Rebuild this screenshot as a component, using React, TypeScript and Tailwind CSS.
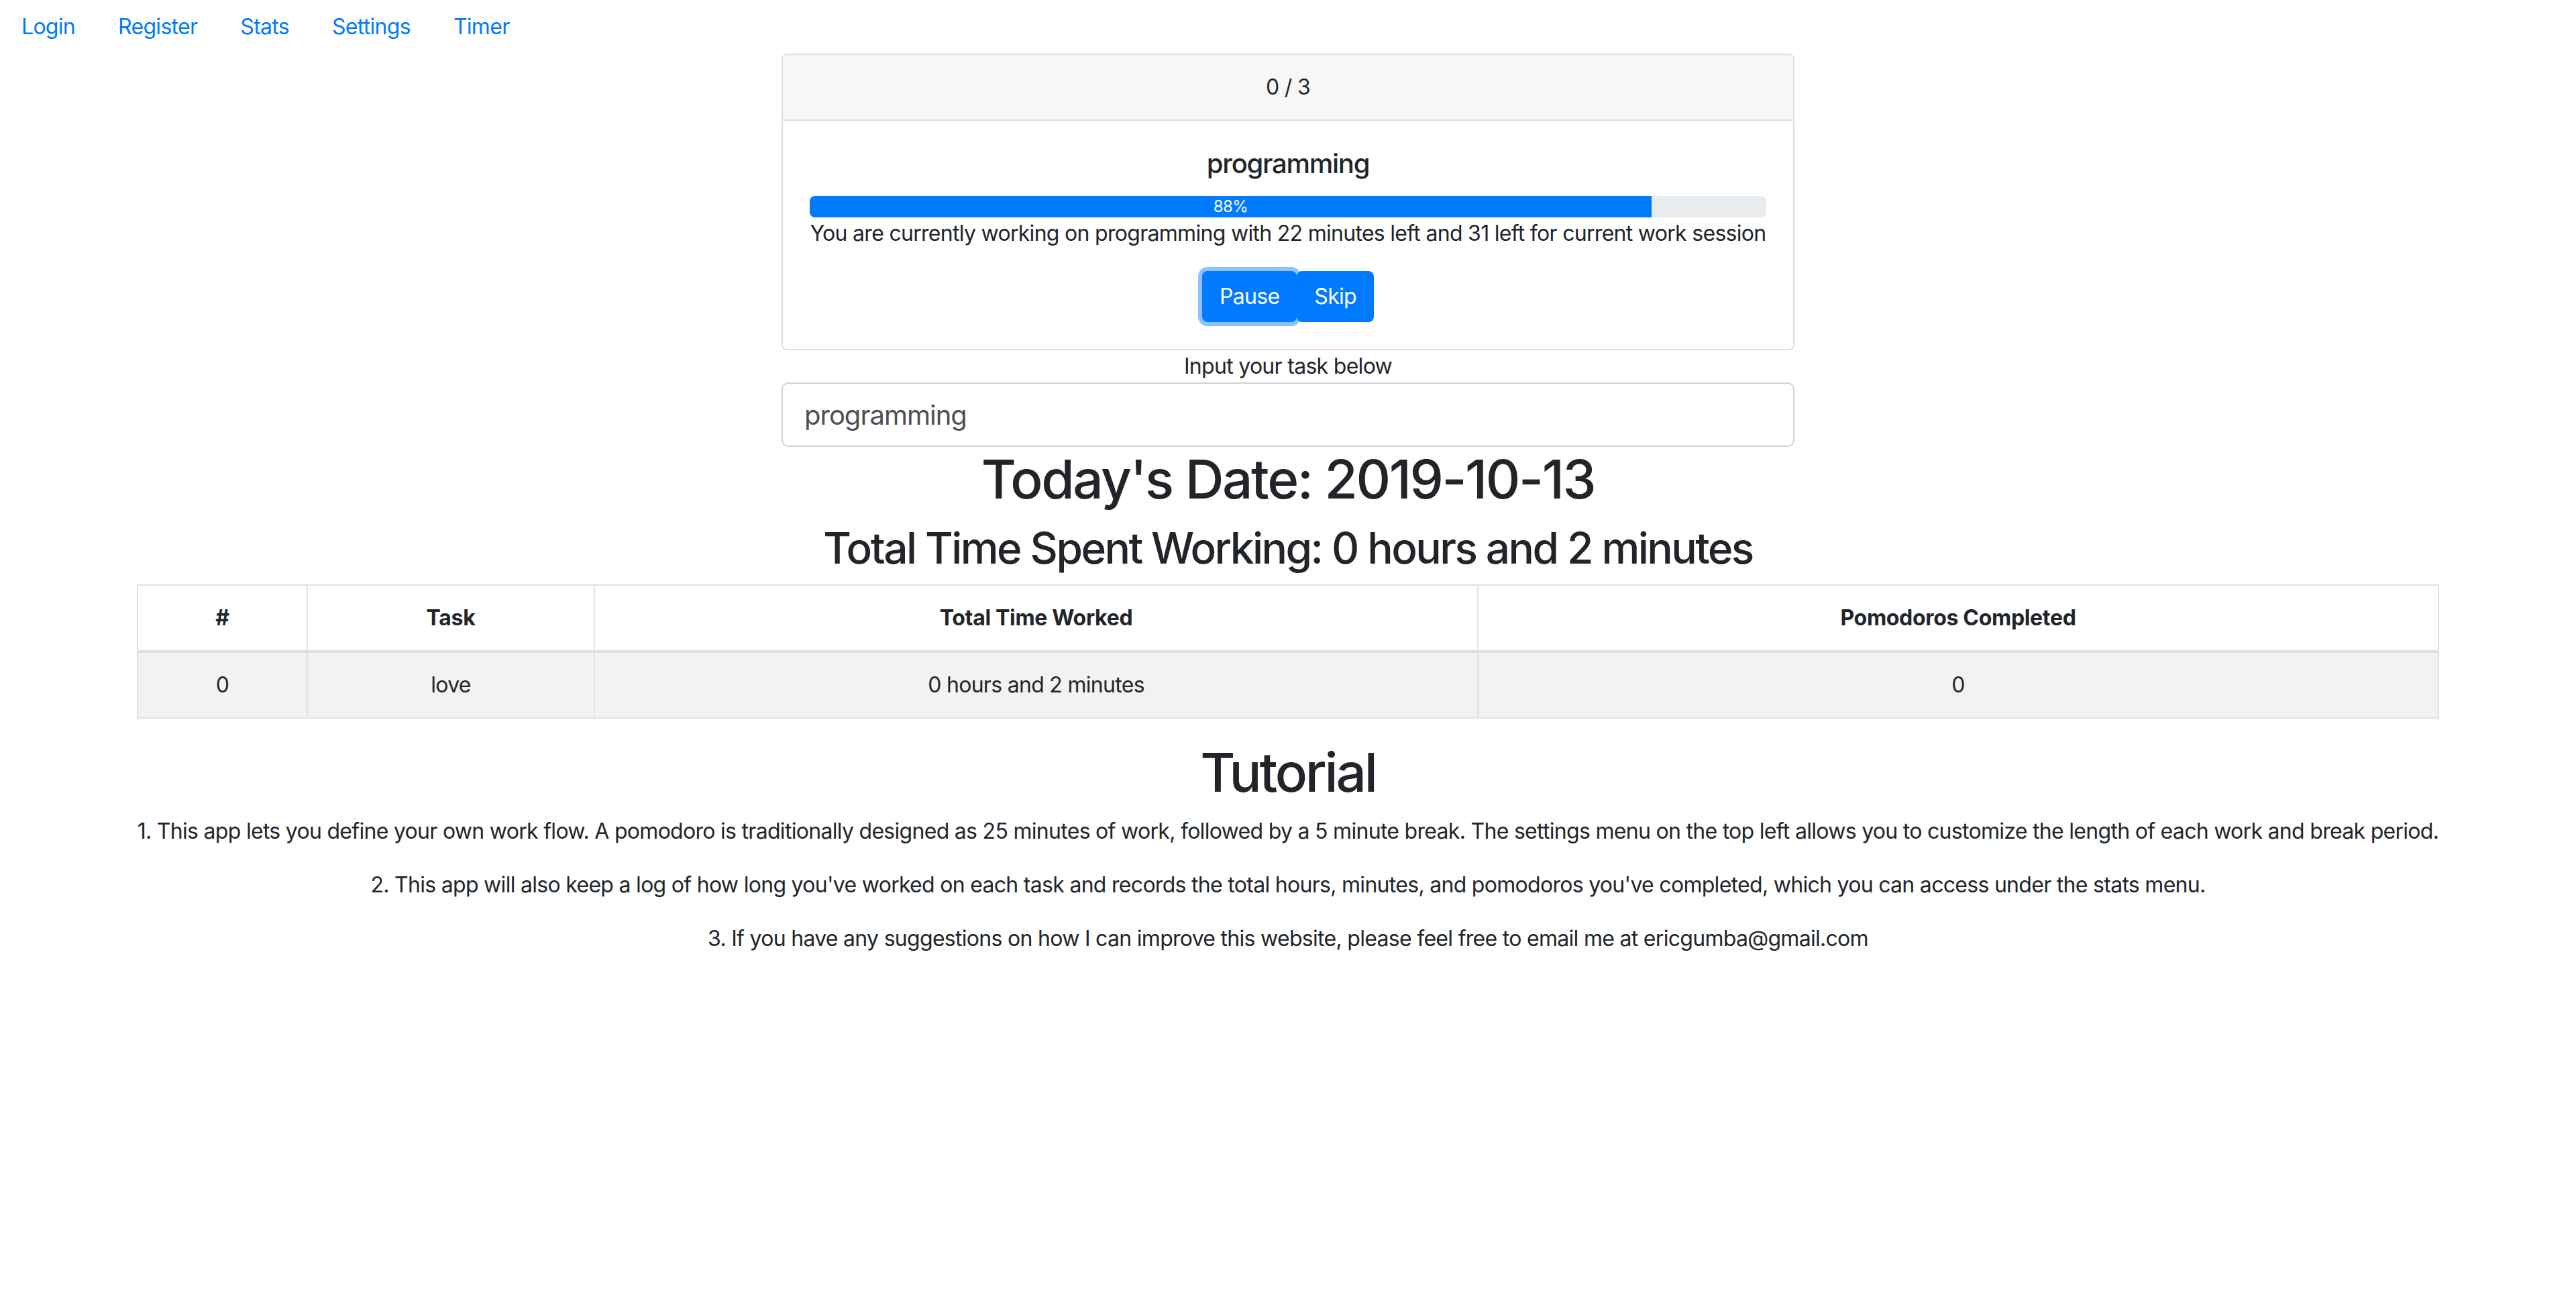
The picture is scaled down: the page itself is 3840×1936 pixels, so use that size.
import { useState } from 'react';

const links = ['Login', 'Register', 'Stats', 'Settings', 'Timer'];

const tutorial = [
  '1. This app lets you define your own work flow. A pomodoro is traditionally designed as 25 minutes of work, followed by a 5 minute break. The settings menu on the top left allows you to customize the length of each work and break period.',
  "2. This app will also keep a log of how long you've worked on each task and records the total hours, minutes, and pomodoros you've completed, which you can access under the stats menu.",
  '3. If you have any suggestions on how I can improve this website, please feel free to email me at ericgumba@gmail.com',
];

export default function App() {
  const [task, setTask] = useState('programming');
  const progress = 88;

  return (
    <div className="min-h-screen bg-white text-[#212529] font-['Inter',Arial,sans-serif] text-[32px] leading-[48px] tracking-[-0.022em]">
      <nav className="flex">
        {links.map((l) => (
          <a key={l} href="#" className="px-[32px] py-[16px] text-[#007bff]">
            {l}
          </a>
        ))}
      </nav>

      <div className="w-[1510px] mx-auto">
        <div className="border-2 border-[#dfdfdf] rounded-[8px] overflow-hidden">
          <div className="bg-[#f7f7f7] border-b-2 border-[#dfdfdf] py-[24px] text-center">0 / 3</div>
          <div className="p-[40px] text-center">
            <h5 className="text-[40px] leading-[48px] font-medium mb-[24px] tracking-[-0.032em]">{task}</h5>
            <div className="h-[32px] bg-[#e9ecef] rounded-[8px] overflow-hidden flex">
              <div
                className="bg-[#007bff] text-white text-[24px] leading-[32px] text-center"
                style={{ width: `${progress}%` }}
              >
                {progress}%
              </div>
            </div>
            <p className="mb-[32px] whitespace-nowrap">
              You are currently working on {task} with 22 minutes left and 31 left for current work session
            </p>
            <div className="flex justify-center">
              <button className="bg-[#007bff] text-white border-2 border-[#007bff] rounded-[8px] px-[24px] py-[12px] shadow-[0_0_0_6px_rgba(0,123,255,0.45)]">
                Pause
              </button>
              <button className="bg-[#007bff] text-white border-2 border-[#007bff] rounded-[8px] px-[24px] py-[12px]">
                Skip
              </button>
            </div>
          </div>
        </div>
        <div className="text-center">Input your task below</div>
        <input
          value={task}
          onChange={(e) => setTask(e.target.value)}
          className="block w-full h-[96px] px-[32px] text-[40px] text-[#495057] tracking-[-0.025em] border-2 border-[#ced4da] rounded-[10px] outline-none"
        />
      </div>

      <h1 className="text-center text-[80px] leading-[96px] font-medium mb-[16px] tracking-[-0.03em]">
        Today's Date: 2019-10-13
      </h1>
      <h2 className="text-center text-[64px] leading-[77px] font-medium mb-[16px] tracking-[-0.04em]">
        Total Time Spent Working: 0 hours and 2 minutes
      </h2>

      <table className="w-[3432px] mx-auto mb-[32px] border-collapse text-center table-fixed">
        <colgroup>
          <col className="w-[253px]" />
          <col className="w-[428px]" />
          <col className="w-[1317px]" />
          <col />
        </colgroup>
        <thead>
          <tr>
            {['#', 'Task', 'Total Time Worked', 'Pomodoros Completed'].map((h) => (
              <th key={h} className="border-2 border-b-4 border-[#dee2e6] p-[24px] font-bold tracking-[-0.01em]">
                {h}
              </th>
            ))}
          </tr>
        </thead>
        <tbody>
          <tr className="bg-[#f2f2f2]">
            {['0', 'love', '0 hours and 2 minutes', '0'].map((c, i) => (
              <td key={i} className="border-2 border-[#dee2e6] p-[24px]">
                {c}
              </td>
            ))}
          </tr>
        </tbody>
      </table>

      <h1 className="text-center text-[80px] leading-[96px] font-medium mb-[16px] tracking-[-0.04em]">Tutorial</h1>
      <div>
        {tutorial.map((t) => (
          <p key={t} className="text-center mb-[32px] whitespace-nowrap">
            {t}
          </p>
        ))}
      </div>
    </div>
  );
}
